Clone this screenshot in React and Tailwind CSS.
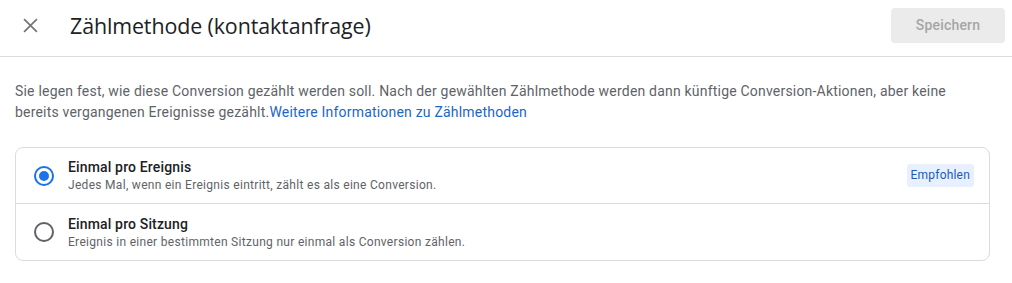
import React from "react";

function Radio({ checked }) {
  return (
    <span
      className={
        "flex h-[20px] w-[20px] shrink-0 items-center justify-center rounded-full border-2 " +
        (checked ? "border-[#1a73e8]" : "border-[#5f6368]")
      }
    >
      {checked && <span className="h-[10px] w-[10px] rounded-full bg-[#1a73e8]" />}
    </span>
  );
}

export default function App() {
  return (
    <div className="h-[283px] w-[1012px] bg-white font-['Roboto',sans-serif] text-[#3c4043]">
      {/* Header */}
      <div className="flex h-[57px] items-start border-b border-[#dadce0] pl-[20px] pr-[7px]">
        <button className="mt-[15px] flex h-[20px] w-[20px] items-center justify-center text-[#5f6368]">
          <svg width="15" height="15" viewBox="0 0 14 14">
            <path d="M1 1L13 13M13 1L1 13" stroke="#757575" strokeWidth="1.6" fill="none" />
          </svg>
        </button>
        <h1 className="ml-[30px] mt-[14px] flex-1 font-['Open_Sans',sans-serif] text-[21.4px] leading-[24px] tracking-[-0.1px] text-[#202124]">
          Zählmethode (kontaktanfrage)
        </h1>
        <button className="mt-[8px] h-[35px] w-[114px] rounded-[4px] bg-[#ebebeb] text-[14px] font-medium tracking-[0.2px] text-[#a6a6a6]">
          Speichern
        </button>
      </div>

      {/* Description */}
      <p className="mt-[24px] pl-[15px] pr-[25px] text-[14px] leading-[21px] tracking-[0.2px] text-[#5f6368]">
        Sie legen fest, wie diese Conversion gezählt werden soll. Nach der gewählten Zählmethode werden dann künftige
        Conversion-Aktionen, aber keine bereits vergangenen Ereignisse gezählt.
        <a className="text-[#1a66c9]">Weitere Informationen zu Zählmethoden</a>
      </p>

      {/* Options */}
      <div className="mx-[15px] mt-[24px] w-[975px] rounded-[8px] border border-[#dadce0]">
        <div className="flex h-[56px] items-center border-b border-[#dadce0] pl-[18px] pr-[15px]">
          <Radio checked />
          <div className="ml-[14px] flex-1">
            <div className="text-[14px] font-medium leading-[18px] tracking-[0.15px] text-[#202124]">Einmal pro Ereignis</div>
            <div className="mt-[1px] text-[12px] leading-[16px] tracking-[0.3px] text-[#5f6368]">
              Jedes Mal, wenn ein Ereignis eintritt, zählt es als eine Conversion.
            </div>
          </div>
          <span className="rounded-[3px] bg-[#e8f0fe] px-[4px] py-[3px] text-[12px] leading-[17px] tracking-[0.2px] text-[#1a5bbf]">
            Empfohlen
          </span>
        </div>
        <div className="flex h-[56px] items-center pl-[18px] pr-[15px]">
          <Radio />
          <div className="ml-[14px] flex-1">
            <div className="text-[14px] font-medium leading-[18px] tracking-[0.15px] text-[#202124]">Einmal pro Sitzung</div>
            <div className="mt-[1px] text-[12px] leading-[16px] tracking-[0.3px] text-[#5f6368]">
              Ereignis in einer bestimmten Sitzung nur einmal als Conversion zählen.
            </div>
          </div>
        </div>
      </div>
    </div>
  );
}
